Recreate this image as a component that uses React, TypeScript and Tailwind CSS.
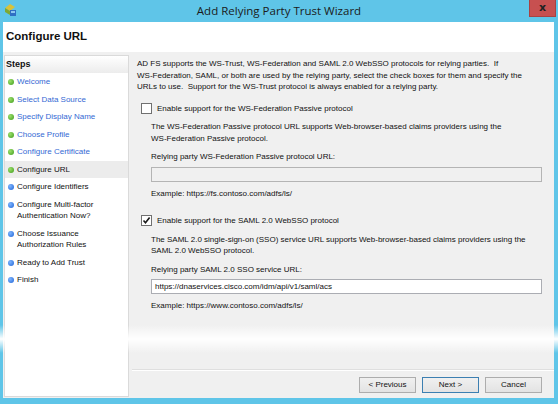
const STEPS = [
  { lines: ['Welcome'], state: 'done' },
  { lines: ['Select Data Source'], state: 'done' },
  { lines: ['Specify Display Name'], state: 'done' },
  { lines: ['Choose Profile'], state: 'done' },
  { lines: ['Configure Certificate'], state: 'done' },
  { lines: ['Configure URL'], state: 'current' },
  { lines: ['Configure Identifiers'], state: 'todo' },
  { lines: ['Configure Multi-factor', 'Authentication Now?'], state: 'todo' },
  { lines: ['Choose Issuance', 'Authorization Rules'], state: 'todo' },
  { lines: ['Ready to Add Trust'], state: 'todo' },
  { lines: ['Finish'], state: 'todo' },
]

function WizardIcon() {
  return (
    <svg width="13" height="14" viewBox="0 0 13 14">
      <path d="M1 5 L6 1 L11 4 L6 8 Z" fill="#d8c23a" />
      <path d="M1 5 L6 8 L6 12 L1 9 Z" fill="#7fa832" />
      <rect x="6" y="7" width="6" height="6" fill="#2f6fc4" />
      <rect x="7" y="8" width="4" height="2" fill="#8cc7f0" />
    </svg>
  )
}

function Checkbox({ checked }: { checked?: boolean }) {
  return (
    <div className="w-[11px] h-[11px] border border-[#707070] bg-white flex items-center justify-center shrink-0">
      {checked && (
        <svg width="9" height="9" viewBox="0 0 9 9">
          <path d="M1.5 4.5 L3.5 6.8 L7.6 1.6" fill="none" stroke="#1a1a1a" strokeWidth="1.6" />
        </svg>
      )}
    </div>
  )
}

function ProtocolBlock({
  checked,
  label,
  desc,
  fieldLabel,
  value,
  example,
}: {
  checked?: boolean
  label: string
  desc: string[]
  fieldLabel: string
  value?: string
  example: string
}) {
  return (
    <div>
      <div className="flex items-center h-[11.5px] pl-[4px] gap-[5px]">
        <Checkbox checked={checked} />
        <span>{label}</span>
      </div>
      <div className="pl-[14px] mt-[7px]">
        {desc.map((l) => (
          <div key={l}>{l}</div>
        ))}
        <div className="mt-[7px]">{fieldLabel}</div>
        <div
          className={`mt-[4px] w-[391px] h-[15px] border flex items-center pl-[3px] ${
            checked ? 'bg-white border-[#abadb3]' : 'bg-[#f0f0f0] border-[#b4b4b4]'
          }`}
        >
          {value}
        </div>
        <div className="mt-[6px]">{example}</div>
      </div>
    </div>
  )
}

function WizButton({ label, primary }: { label: string; primary?: boolean }) {
  return (
    <div
      className={`w-[57px] h-[16px] flex items-center justify-center border bg-linear-to-b from-[#f0f0f0] to-[#e3e3e3] ${
        primary ? 'border-[#3c7fb1]' : 'border-[#adadad]'
      }`}
    >
      {label}
    </div>
  )
}

export default function App() {
  return (
    <div className="relative w-[558px] h-[404px] bg-[#5fc5e8] flex flex-col overflow-hidden font-['Liberation_Sans',Arial,sans-serif] text-[8px] leading-[11.5px] text-[#111]">
      {/* title bar */}
      <div className="h-[22px] grid grid-cols-[1fr_auto_1fr] items-start shrink-0">
        <div className="pl-[4px] pt-[3px]">
          <WizardIcon />
        </div>
        <div className="pt-[3px] font-['Open_Sans',sans-serif] text-[11.5px] leading-[16px] text-[#1b1b1b]">
          Add Relying Party Trust Wizard
        </div>
        <div className="flex justify-end pr-[2px]">
          <div className="w-[27px] h-[17px] bg-[#c75050] border border-[#a84242] border-t-0 flex items-center justify-center text-[11px] font-bold text-[#222] font-['DejaVu_Sans',sans-serif]">
            x
          </div>
        </div>
      </div>

      {/* window body */}
      <div className="flex-1 ml-[3px] mr-[4px] mb-[6px] bg-[#f0f0f0] flex flex-col">
        <div className="h-[30px] bg-white flex items-center pl-[3px] shrink-0">
          <span className="font-bold text-[11.5px] text-[#111]">Configure URL</span>
        </div>

        <div className="flex-1 flex">
          {/* steps */}
          <div className="ml-[1px] mt-[3px] mb-[1px] w-[125px] bg-white border border-[#dadada]">
            <div className="h-[17px] flex items-center pl-[1px] bg-linear-to-b from-white to-[#ececec] font-bold text-[9px]">
              Steps
            </div>
            {STEPS.map((s) => (
              <div
                key={s.lines[0]}
                className={`flex items-start gap-[3px] pl-[3px] py-[3px] ${s.state === 'current' ? 'bg-[#ececec]' : ''}`}
              >
                <div
                  className={`w-[6px] h-[6px] rounded-full mt-[3px] shrink-0 ${
                    s.state === 'todo'
                      ? 'bg-radial-[at_35%_35%] from-[#7fb6ff] to-[#1f63d6]'
                      : 'bg-radial-[at_35%_35%] from-[#9be06a] to-[#3f9a1c]'
                  }`}
                />
                <div className={s.state === 'done' ? 'text-[#3469d4]' : 'text-[#111]'}>
                  {s.lines.map((l) => (
                    <div key={l}>{l}</div>
                  ))}
                </div>
              </div>
            ))}
          </div>

          {/* page content */}
          <div className="flex-1 ml-[3px] flex flex-col">
            <div className="flex-1 pl-[5px] pt-[6px] whitespace-nowrap">
              <div>AD FS supports the WS-Trust, WS-Federation and SAML 2.0 WebSSO protocols for relying parties.&nbsp; If</div>
              <div>WS-Federation, SAML, or both are used by the relying party, select the check boxes for them and specify the</div>
              <div>URLs to use.&nbsp; Support for the WS-Trust protocol is always enabled for a relying party.</div>

              <div className="mt-[10px]">
                <ProtocolBlock
                  label="Enable support for the WS-Federation Passive protocol"
                  desc={[
                    'The WS-Federation Passive protocol URL supports Web-browser-based claims providers using the',
                    'WS-Federation Passive protocol.',
                  ]}
                  fieldLabel="Relying party WS-Federation Passive protocol URL:"
                  example="Example: https://fs.contoso.com/adfs/ls/"
                />
              </div>
              <div className="mt-[16px]">
                <ProtocolBlock
                  checked
                  label="Enable support for the SAML 2.0 WebSSO protocol"
                  desc={[
                    'The SAML 2.0 single-sign-on (SSO) service URL supports Web-browser-based claims providers using the',
                    'SAML 2.0 WebSSO protocol.',
                  ]}
                  fieldLabel="Relying party SAML 2.0 SSO service URL:"
                  value="https://dnaservices.cisco.com/idm/api/v1/saml/acs"
                  example="Example: https://www.contoso.com/adfs/ls/"
                />
              </div>
            </div>
            <div className="h-[1px] bg-[#dfdfdf]" />
            <div className="h-[1px] bg-white" />
            <div className="h-[27px] flex items-center justify-end gap-[6px] pr-[12px]">
              <WizButton label="< Previous" />
              <WizButton label="Next >" primary />
              <WizButton label="Cancel" />
            </div>
          </div>
        </div>
      </div>

      {/* washed-out band across the lower window */}
      <div className="pointer-events-none absolute left-0 right-0 top-[325px] h-[28px] bg-linear-to-b from-white/0 via-white to-white/0" />
    </div>
  )
}
